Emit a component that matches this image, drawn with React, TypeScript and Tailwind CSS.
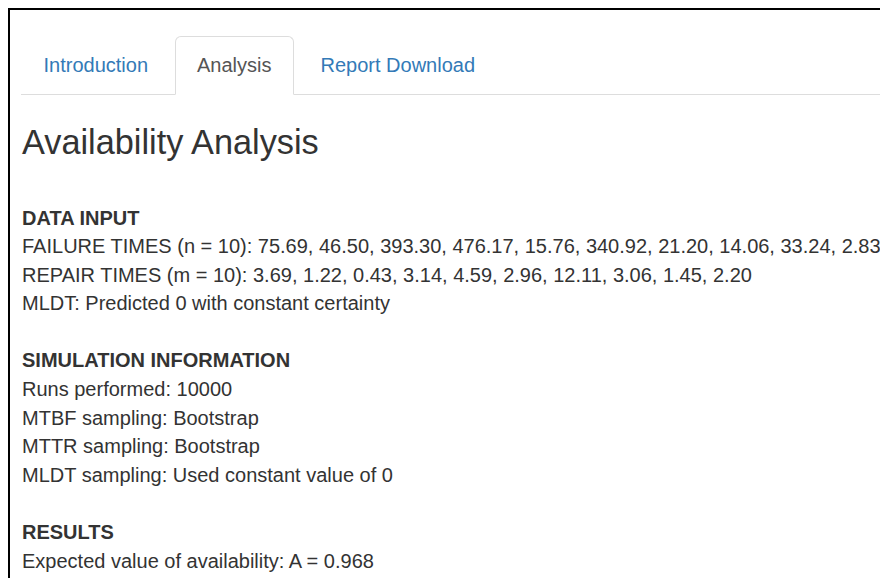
import { useState } from "react";

const tabs = ["Introduction", "Analysis", "Report Download"];

const failureTimes = [75.69, 46.5, 393.3, 476.17, 15.76, 340.92, 21.2, 14.06, 33.24, 2.83];
const repairTimes = [3.69, 1.22, 0.43, 3.14, 4.59, 2.96, 12.11, 3.06, 1.45, 2.2];

const fmt = (xs: number[]) => xs.map((x) => x.toFixed(2)).join(", ");

function Tabs() {
  const [active, setActive] = useState("Analysis");
  return (
    <ul className="flex border-b border-[#ddd]">
      {tabs.map((t) => (
        <li key={t} className="-mb-px mr-[4px]">
          <a
            onClick={() => setActive(t)}
            className={
              t === active
                ? "block cursor-default rounded-t-[6px] border border-[#ddd] border-b-transparent bg-white px-[21.5px] py-[14.3px] leading-[28.6px] text-[#555]"
                : "block cursor-pointer rounded-t-[6px] border border-transparent px-[21.5px] py-[14.3px] leading-[28.6px] text-[#337ab7] hover:bg-[#eee]"
            }
          >
            {t}
          </a>
        </li>
      ))}
    </ul>
  );
}

function Section({ title, lines }: { title: string; lines: string[] }) {
  return (
    <div className="mb-[28.6px]">
      <b className="block font-bold">{title}</b>
      {lines.map((l) => (
        <div key={l}>{l}</div>
      ))}
    </div>
  );
}

export default function App() {
  return (
    <div className="h-[578px] w-[880px] overflow-hidden bg-white">
      <div
        className="ml-2 mt-2 h-[600px] w-[1100px] border-l-2 border-t-2 border-black pl-[11px] pt-[26px] text-[20px] leading-[28.6px] text-[#333]"
        style={{ fontFamily: '"Liberation Sans", Arial, sans-serif' }}
      >
        <Tabs />
        <h3 className="mb-[42px] mt-[28.6px] pl-px text-[34.3px] leading-[1.1] font-normal">
          Availability Analysis
        </h3>
        <div className="whitespace-nowrap pl-px">
          <Section
            title="DATA INPUT"
            lines={[
              `FAILURE TIMES (n = 10): ${fmt(failureTimes)}`,
              `REPAIR TIMES (m = 10): ${fmt(repairTimes)}`,
              "MLDT: Predicted 0 with constant certainty",
            ]}
          />
          <Section
            title="SIMULATION INFORMATION"
            lines={[
              "Runs performed: 10000",
              "MTBF sampling: Bootstrap",
              "MTTR sampling: Bootstrap",
              "MLDT sampling: Used constant value of 0",
            ]}
          />
          <Section title="RESULTS" lines={["Expected value of availability: A = 0.968"]} />
        </div>
      </div>
    </div>
  );
}
